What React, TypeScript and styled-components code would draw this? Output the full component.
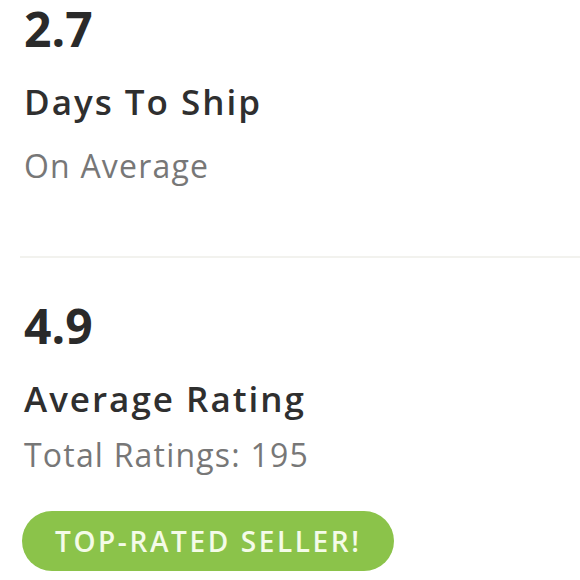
import styled, { createGlobalStyle } from "styled-components"

const Global = createGlobalStyle`
  body {
    margin: 0;
    background: #fff;
    font-family: "Open Sans", "Liberation Sans", sans-serif;
  }
`

const Page = styled.div`
  width: 580px;
  height: 580px;
  overflow: hidden;
  box-sizing: border-box;
  padding-left: 22px;
`

const Stat = styled.section<{ $top: number; $bottom: number }>`
  padding-top: ${(p) => p.$top}px;
  padding-bottom: ${(p) => p.$bottom}px;
`

const Value = styled.div`
  font-size: 48px;
  font-weight: 700;
  color: #2a2a2a;
  line-height: 50px;
  padding-left: 2px;
`

const Title = styled.div`
  font-size: 35px;
  font-weight: 600;
  color: #2f2f2f;
  line-height: 40px;
  letter-spacing: 2px;
  margin-top: 28px;
  padding-left: 2px;
`

const Sub = styled.div<{ $gap: number }>`
  font-size: 32px;
  color: #777;
  line-height: 40px;
  letter-spacing: 1.2px;
  margin-top: ${(p) => p.$gap}px;
  padding-left: 2px;
`

const Divider = styled.hr`
  border: 0;
  height: 2px;
  background: #f2f2ee;
  margin: 0 0 0 -2px;
`

const Badge = styled.div`
  display: inline-flex;
  align-items: center;
  justify-content: center;
  height: 60px;
  padding: 0 32px 0 33px;
  margin-top: 36px;
  border-radius: 30px;
  background: #8bc34a;
  color: #f4fbe8;
  font-size: 28px;
  font-weight: 600;
  letter-spacing: 2.6px;
`

const App = () => {
  return (
    <Page>
      <Global />
      <Stat $top={4} $bottom={70}>
        <Value>2.7</Value>
        <Title>Days To Ship</Title>
        <Sub $gap={24}>On Average</Sub>
      </Stat>
      <Divider />
      <Stat $top={43} $bottom={0}>
        <Value>4.9</Value>
        <Title>Average Rating</Title>
        <Sub $gap={16}>Total Ratings: 195</Sub>
        <Badge>TOP-RATED SELLER!</Badge>
      </Stat>
    </Page>
  )
}

export default App
